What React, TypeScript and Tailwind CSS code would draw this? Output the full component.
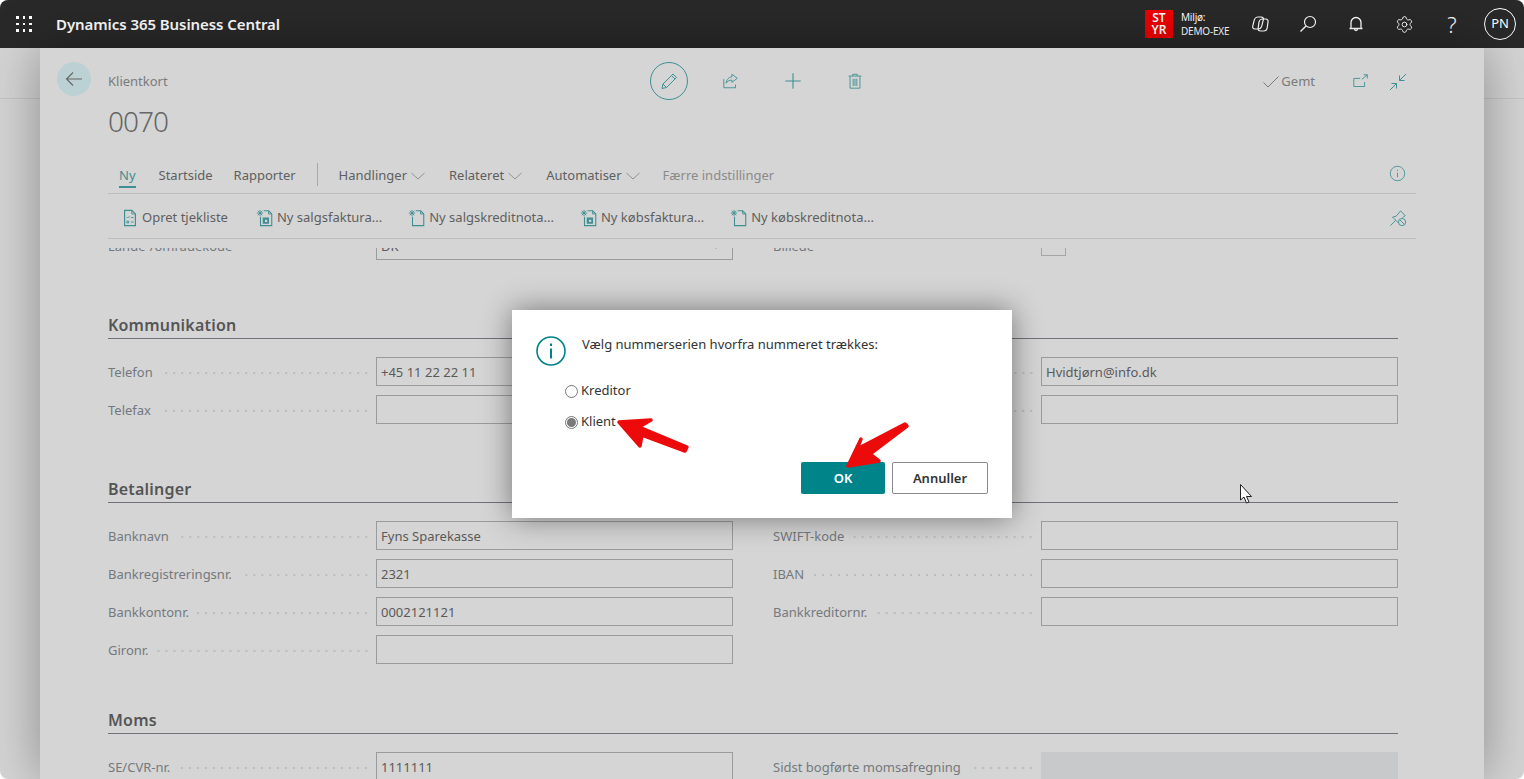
import { ChevronDown, Settings } from "lucide-react";

const font = "font-['Noto_Sans',sans-serif]";
const teal = "#3f8f93";

// Teal outline icon used in the dimmed card toolbar
const Ico = ({ size = 20, children }: { size?: number; children: React.ReactNode }) => (
  <svg width={size} height={size} viewBox="0 0 20 20" fill="none" stroke={teal} strokeWidth={1} className="shrink-0">
    {children}
  </svg>
);

const ChecklistIcon = () => (
  <Ico size={18}>
    <path d="M4 1.500h8l4 4v13H4z" strokeWidth={1.3} />
    <path d="M12 1.500v4h4M6.500 9l1 1 2-2M11 9.500h3M6.500 13.500h2v2h-2zM11 14.500h3" />
  </Ico>
);

const NewDocIcon = ({ filled }: { filled?: boolean }) => (
  <Ico size={18}>
    <path d="M8.500 2h5.500l3.500 3.500V18.500H5V8.500" strokeWidth={1.2} />
    <path d="M14 2v3.500h3.500" />
    <path d="M4.500 1v7M1 4.500h7M2 2l5 5M7 2L2 7" strokeWidth={1} />
    {filled && (
      <path
        d="M7.500 9.500h7v7h-7zM10 12v2.500h2.500V12z"
        fill={teal}
        fillRule="evenodd"
        stroke="none"
      />
    )}
  </Ico>
);

const Chevron = () => (
  <svg width="14" height="8" viewBox="0 0 14 8" fill="none" stroke="#8a8a8a" strokeWidth={0.9} className="ml-[4px] shrink-0">
    <path d="M.5 1 7 7l6.500-6" />
  </svg>
);

const MenuItem = ({ label, chevron, className = "" }: { label: string; chevron?: boolean; className?: string }) => (
  <div className={`flex items-center text-[#5f5f5f] ${className}`}>
    <span>{label}</span>
    {chevron && <Chevron />}
  </div>
);

const ActionItem = ({ icon, label, className = "" }: { icon: React.ReactNode; label: string; className?: string }) => (
  <div className={`flex items-center gap-[3px] text-[#5f5f5f] ${className}`}>
    {icon}
    <span>{label}</span>
  </div>
);

interface FieldProps {
  label?: string;
  value?: string;
  shaded?: boolean;
  select?: boolean;
  picture?: boolean;
}

const Field = ({ label, value, shaded, select, picture }: FieldProps) => {
  if (!label) return <div className="h-[29px]" />;
  return (
    <div className="flex h-[29px] items-center text-[13px]">
      <div className="flex h-[29px] w-[268px] shrink-0 items-center pt-[2px] pr-[6px]">
        <span className="whitespace-nowrap text-[#74797e]">{label}</span>
        <div className="mt-[1px] ml-[8px] h-[2px] flex-1 bg-[radial-gradient(circle,#bcbcbc_1px,transparent_1px)] bg-[length:8px_2px] bg-right" />
      </div>
      {picture ? (
        <div className="h-[25px] w-[25px] self-start border border-[#a5a5a5]" />
      ) : (
        <div
          className={`flex h-[29px] flex-1 items-center justify-between px-[4px] pt-[2px] text-[#5a5a5a] ${
            shaded ? "bg-[#c8c9ca]" : "border border-[#999b9d]"
          }`}
        >
          <span>{value}</span>
          {select && <ChevronDown size={12} strokeWidth={1} className="mr-[6px] text-[#777]" />}
        </div>
      )}
    </div>
  );
};

const Section = ({ title, fields, className }: { title: string; fields: FieldProps[]; className: string }) => (
  <section className={className}>
    <h2 className="h-[26px] border-b border-[#6f7279] text-[16px] leading-[24px] font-semibold tracking-[0.2px] text-[#555]">
      {title}
    </h2>
    <div className="mt-[18px] grid grid-cols-2 gap-x-[40px] gap-y-[9px]">
      {fields.map((f, i) => (
        <Field key={i} {...f} />
      ))}
    </div>
  </section>
);

const CopilotIcon = () => (
  <svg width="20" height="18" viewBox="0 0 20 18" fill="none" stroke="white" strokeWidth={1.2}>
    <rect x="4" y="2" width="9" height="12" rx="3" transform="skewX(-14) translate(1.500 0)" />
    <rect x="9" y="4" width="9" height="12" rx="3" transform="skewX(-8) translate(1 0)" />
  </svg>
);

const HeaderCell = ({ children }: { children: React.ReactNode }) => (
  <div className="flex h-[48px] w-[48px] items-center justify-center">{children}</div>
);

export default function App() {
  return (
    <div className={`h-[779px] w-[1524px] overflow-hidden bg-white ${font}`}>
      <div className="relative flex h-full flex-col overflow-hidden rounded-[8px] bg-[#d4d4d4]">
        {/* Top bar */}
        <header className="flex h-[48px] shrink-0 items-center bg-[#292929] text-white">
          <div className="ml-[16px] grid w-[16px] grid-cols-3 gap-[4px]">
            {Array.from({ length: 9 }).map((_, i) => (
              <span key={i} className="h-[2.5px] w-[2.5px] bg-white" />
            ))}
          </div>
          <span className="ml-[24px] text-[15px] font-semibold tracking-[-0.07px]">Dynamics 365 Business Central</span>
          <div className="ml-auto flex items-center">
            <div className="flex h-[28px] w-[28px] items-center justify-center bg-[#ee0000] text-center text-[12px] leading-[12px] font-semibold">
              <span>
                ST
                <br />
                YR
              </span>
            </div>
            <div className="ml-[8px] w-[55px] text-[10px] leading-[14px] tracking-[-0.2px]">
              <div>Miljø:</div>
              <div>DEMO-EXE</div>
            </div>
            <HeaderCell>
              <CopilotIcon />
            </HeaderCell>
            <HeaderCell>
              <svg width="18" height="18" viewBox="0 0 18 18" fill="none" stroke="white" strokeWidth={1.2}>
                <circle cx="11" cy="7" r="5.500" />
                <path d="M7 11 1.500 16.500" strokeWidth={1.4} />
              </svg>
            </HeaderCell>
            <HeaderCell>
              <svg width="18" height="18" viewBox="0 0 18 18" fill="none" stroke="white" strokeWidth={1.3}>
                <path d="M4 13V7.500a5 5 0 0 1 10 0V13M2.500 13.500h13M7.500 14a1.500 1.500 0 0 0 3 0" />
              </svg>
            </HeaderCell>
            <HeaderCell>
              <Settings size={19} strokeWidth={1.2} />
            </HeaderCell>
            <HeaderCell>
              <span className="text-[22px] font-light">?</span>
            </HeaderCell>
            <div className="mr-[8px] ml-[8px] flex h-[32px] w-[32px] items-center justify-center rounded-full border border-white text-[13px]">
              PN
            </div>
          </div>
        </header>

        {/* Page behind the card */}
        <main className="min-h-0 flex-1 bg-[linear-gradient(to_bottom,transparent_50px,#c4c4c4_50px,#c4c4c4_51px,transparent_51px)] px-[40px]">
          <div className="flex h-full w-[1444px] flex-col overflow-hidden bg-[#d5d5d5] shadow-[0_0_50px_rgba(0,0,0,0.34)]">
            <div className="flex h-[107px] shrink-0 pr-[76px] pl-[17px]">
              <div className="mt-[14px] flex h-[34px] w-[34px] items-center justify-center rounded-full bg-[#bcd1d3]">
                <svg width="18" height="18" viewBox="0 0 18 18" fill="none" stroke="#666" strokeWidth={1.1}>
                  <path d="M17 9H1.500M8 2.500 1.500 9 8 15.500" />
                </svg>
              </div>
              <div className="ml-[17px] w-[542px]">
                <div className="mt-[24px] text-[13px] leading-[18px] text-[#7b7b7b]">Klientkort</div>
                <div className="mt-[12px] text-[28px] leading-[38px] font-light tracking-[-1px] text-[#666]">0070</div>
              </div>
              <div className="mt-[14px] flex h-[38px] w-[38px] items-center justify-center rounded-full border border-[#3f8f93]">
                <Ico size={20}>
                  <path d="M3 17.500l1-4.500L14 3l3.500 3.500-10 10zM4 13l3.500 3.500M12.500 4.500 16 8" />
                </Ico>
              </div>
              <div className="mt-[14px] ml-[23px] flex h-[38px] w-[40px] items-center justify-center">
                <Ico size={18}>
                  <path d="M11 2.500l6 4.500-6 4.500V9c-3 0-5 1-6.500 3.500C5 8.500 7.500 5.500 11 5.500z" />
                  <path d="M2 8v9.500h13V14" />
                </Ico>
              </div>
              <div className="mt-[14px] ml-[22px] flex h-[38px] w-[40px] items-center justify-center">
                <Ico size={18}>
                  <path d="M10 1.500v17M1.500 10h17" strokeWidth={1.2} />
                </Ico>
              </div>
              <div className="mt-[14px] ml-[22px] flex h-[38px] w-[40px] items-center justify-center">
                <Ico size={18}>
                  <path d="M3 4.500h14M7.500 4.500V2.500h5v2M4.500 4.500v13.500h11V4.500M8 7.500v8M10 7.500v8M12 7.500v8" />
                </Ico>
              </div>
              <div className="ml-auto flex h-[38px] items-center pt-[30px] text-[13px] text-[#7b7b7b]">
                <div className="flex items-center">
                  <svg width="16" height="12" viewBox="0 0 16 12" fill="none" stroke="#7b7b7b" strokeWidth={1} className="mr-[2px]">
                    <path d="M.5 6.500 5 11 15.500.5" />
                  </svg>
                  <span>Gemt</span>
                </div>
                <div className="ml-[37px]">
                  <Ico size={18}>
                    <path d="M9 6H2v9h12v-5M11 7l6-5M13 2h4v4" />
                  </Ico>
                </div>
                <div className="ml-[18px]">
                  <Ico size={20}>
                    <path d="M11.500 8.500 18 2M11.500 3.500v5h5M8.500 11.500 2 18M3.500 11.500h5v5" />
                  </Ico>
                </div>
              </div>
            </div>

            {/* Tabs */}
            <div className="mx-[68px] flex h-[39px] shrink-0 items-center border-b border-[#bcbcbc] pt-[4px] text-[13px]">
              <div className="relative ml-[11px] text-[#3f8f93]">
                Ny
                <span className="absolute right-0 bottom-[-2px] left-0 h-[2px] bg-[#3f8f93]" />
              </div>
              <MenuItem label="Startside" className="ml-[23px]" />
              <MenuItem label="Rapporter" className="ml-[21px]" />
              <div className="mx-[21px] -mt-[3px] h-[23px] w-px bg-[#a8a8a8]" />
              <MenuItem label="Handlinger" chevron />
              <MenuItem label="Relateret" chevron className="ml-[24px]" />
              <MenuItem label="Automatiser" chevron className="ml-[24px]" />
              <span className="ml-[23px] text-[#8a8a8a]">Færre indstillinger</span>
              <div className="mr-[10px] mb-[6px] ml-auto">
                <Ico size={17}>
                  <circle cx="10" cy="10" r="8.500" />
                  <path d="M10 9v5.500M10 5.500v1.500" />
                </Ico>
              </div>
            </div>

            {/* Actions */}
            <div className="mx-[68px] flex h-[45px] shrink-0 items-center border-b border-[#bcbcbc] pt-[3px] text-[13px]">
              <ActionItem icon={<ChecklistIcon />} label="Opret tjekliste" className="ml-[13px]" />
              <ActionItem icon={<NewDocIcon filled />} label="Ny salgsfaktura..." className="ml-[28px]" />
              <ActionItem icon={<NewDocIcon />} label="Ny salgskreditnota..." className="ml-[26px]" />
              <ActionItem icon={<NewDocIcon filled />} label="Ny købsfaktura..." className="ml-[26px]" />
              <ActionItem icon={<NewDocIcon />} label="Ny købskreditnota..." className="ml-[26px]" />
              <div className="mr-[9px] ml-auto">
                <Ico size={18}>
                  <path d="M1.500 18.500l6-6M4 9l4-1 5-6 5 5.500-3 2M4 9l6.500 6.500" />
                  <circle cx="14.500" cy="14.500" r="4" />
                  <path d="M12 12l5 5" />
                </Ico>
              </div>
            </div>

            {/* Form, scrolled so the first row is cut off */}
            <div className="mt-[9px] min-h-0 flex-1 overflow-hidden">
              <div className="-mt-[17px] ml-[68px] w-[1290px]">
                <div className="grid grid-cols-2 gap-x-[40px]">
                  <Field label="Lande-/områdekode" value="DK" select />
                  <Field label="Billede" picture />
                </div>
                <Section
                  title="Kommunikation"
                  className="mt-[53px]"
                  fields={[
                    { label: "Telefon", value: "+45 11 22 22 11" },
                    { label: "E-mail", value: "Hvidtjørn@info.dk" },
                    { label: "Telefax" },
                    { label: "Hjemmeside" },
                  ]}
                />
                <Section
                  title="Betalinger"
                  className="mt-[53px]"
                  fields={[
                    { label: "Banknavn", value: "Fyns Sparekasse" },
                    { label: "SWIFT-kode" },
                    { label: "Bankregistreringsnr.", value: "2321" },
                    { label: "IBAN" },
                    { label: "Bankkontonr.", value: "0002121121" },
                    { label: "Bankkreditornr." },
                    { label: "Gironr." },
                    {},
                  ]}
                />
                <Section
                  title="Moms"
                  className="mt-[44px]"
                  fields={[
                    { label: "SE/CVR-nr.", value: "1111111" },
                    { label: "Sidst bogførte momsafregning", shaded: true },
                  ]}
                />
              </div>
            </div>
          </div>
        </main>

        {/* Dialog */}
        <div className="absolute top-[310px] left-[512px] h-[208px] w-[500px] bg-white pt-[26px] pr-[24px] pl-[24px] shadow-[0_0_28px_rgba(0,0,0,0.45)]">
          <div className="flex">
            <svg width="30" height="30" viewBox="0 0 30 30" fill="none" stroke="#00838a" strokeWidth={1.6} className="shrink-0">
              <circle cx="15" cy="15" r="14" />
              <path d="M15 12.500v10M15 7.500v2.400" strokeWidth={2} />
            </svg>
            <p className="-mt-[1px] ml-[16px] text-[13px] leading-[18px] text-[#333]">
              Vælg nummerserien hvorfra nummeret trækkes:
            </p>
          </div>
          <div className="mt-[15px] ml-[29px] text-[13px] text-[#333]">
            <div className="flex h-[20px] items-center">
              <span className="h-[13px] w-[13px] rounded-full border border-[#777]" />
              <span className="ml-[3px]">Kreditor</span>
            </div>
            <div className="mt-[11px] flex h-[20px] items-center">
              <span className="flex h-[13px] w-[13px] items-center justify-center rounded-full border border-[#777]">
                <span className="h-[9px] w-[9px] rounded-full bg-[#7a7a7a]" />
              </span>
              <span className="ml-[3px]">Klient</span>
            </div>
          </div>
          <div className="mt-[30px] flex justify-end gap-[7px] text-[13px] font-semibold">
            <button className="h-[32px] w-[84px] rounded-[2px] bg-[#00848a] pt-px text-white">OK</button>
            <button className="h-[32px] w-[96px] rounded-[2px] border border-[#8a8a8a] bg-white pt-px text-[#333]">Annuller</button>
          </div>
        </div>

        {/* Red arrows and mouse pointer painted over the screenshot */}
        <svg width="1524" height="779" viewBox="0 0 1524 779" className="pointer-events-none absolute top-0 left-0">
          <g fill="#ec0a0a" stroke="#ec0a0a" strokeWidth={3.5} strokeLinejoin="round">
            <polygon points="619,422 651,420 639,427 687,447 685,451 642,435 640,446" />
            <polygon points="848,466 879,461 870,454 907,426 905,424 857,449 861,439" />
          </g>
          <polygon points="1240.500,484.500 1240.500,500 1244,497 1246.500,503 1249,502 1246.500,496.500 1251.500,496.500" fill="white" stroke="#222" strokeWidth={1} />
        </svg>
      </div>
    </div>
  );
}
